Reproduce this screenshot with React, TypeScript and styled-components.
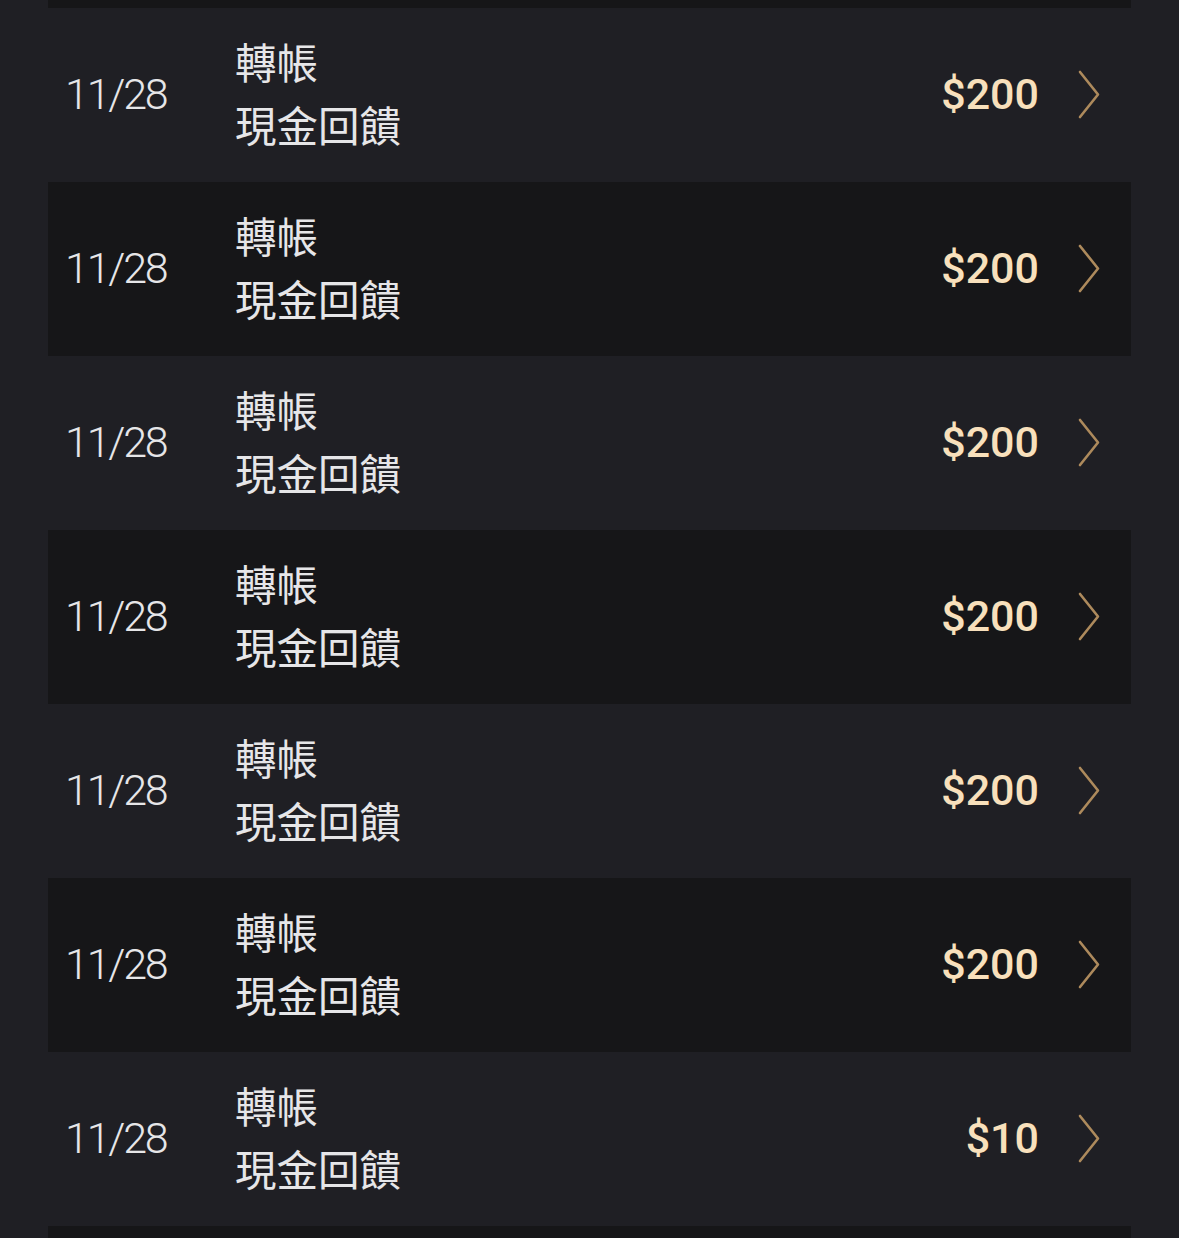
import React from "react";
import styled, { createGlobalStyle } from "styled-components";

const Global = createGlobalStyle`
  html, body {
    margin: 0;
    padding: 0;
    background: #1f1f24;
    overflow: hidden;
  }
  * { box-sizing: border-box; }
`;

const Viewport = styled.div`
  height: 100vh;
  overflow: hidden;
  background: #1f1f24;
  padding: 0 48px;
`;

const List = styled.ul`
  list-style: none;
  margin: -166px 0 0 0;
  padding: 0;
  display: flex;
  flex-direction: column;
`;

const Row = styled.li<{ $dark: boolean }>`
  height: 174px;
  display: grid;
  grid-template-columns: 170px 1fr auto auto;
  align-items: center;
  padding: 0 29px 0 17px;
  background: ${(p) => (p.$dark ? "#161618" : "#1f1f24")};
`;

const DateText = styled.span`
  font-family: Roboto, "Liberation Sans", sans-serif;
  font-weight: 300;
  font-size: 43px;
  letter-spacing: -2.2px;
  color: #e6e6e8;
  margin-top: -2px;
`;

const Labels = styled.div`
  display: flex;
  flex-direction: column;
  font-family: "Noto Sans CJK TC", "Noto Sans", sans-serif;
  font-weight: 400;
  font-size: 41.5px;
  line-height: 63px;
  color: #e6e6e8;
  margin-top: -4px;
`;

const Amount = styled.span`
  font-family: Roboto, "Liberation Sans", sans-serif;
  font-weight: 500;
  font-size: 43px;
  color: #f8e0bc;
  margin-top: -2px;
`;

const Chevron = styled.svg`
  width: 26px;
  height: 50px;
  margin-left: 37px;
  display: block;
`;

const items = [
  { dark: true, amount: "$200" },
  { dark: false, amount: "$200" },
  { dark: true, amount: "$200" },
  { dark: false, amount: "$200" },
  { dark: true, amount: "$200" },
  { dark: false, amount: "$200" },
  { dark: true, amount: "$200" },
  { dark: false, amount: "$10" },
  { dark: true, amount: "$200" },
];

export default function App() {
  return (
    <>
      <Global />
      <Viewport>
        <List>
          {items.map((it, i) => (
            <Row key={i} $dark={it.dark}>
              <DateText>11/28</DateText>
              <Labels>
                <span>轉帳</span>
                <span>現金回饋</span>
              </Labels>
              <Amount>{it.amount}</Amount>
              <Chevron viewBox="0 0 26 50" fill="none">
                <path
                  d="M4 2 L22 24.5 L4 47"
                  stroke="#ad8a5c"
                  strokeWidth="2.6"
                  strokeLinecap="round"
                  strokeLinejoin="round"
                />
              </Chevron>
            </Row>
          ))}
        </List>
      </Viewport>
    </>
  );
}
